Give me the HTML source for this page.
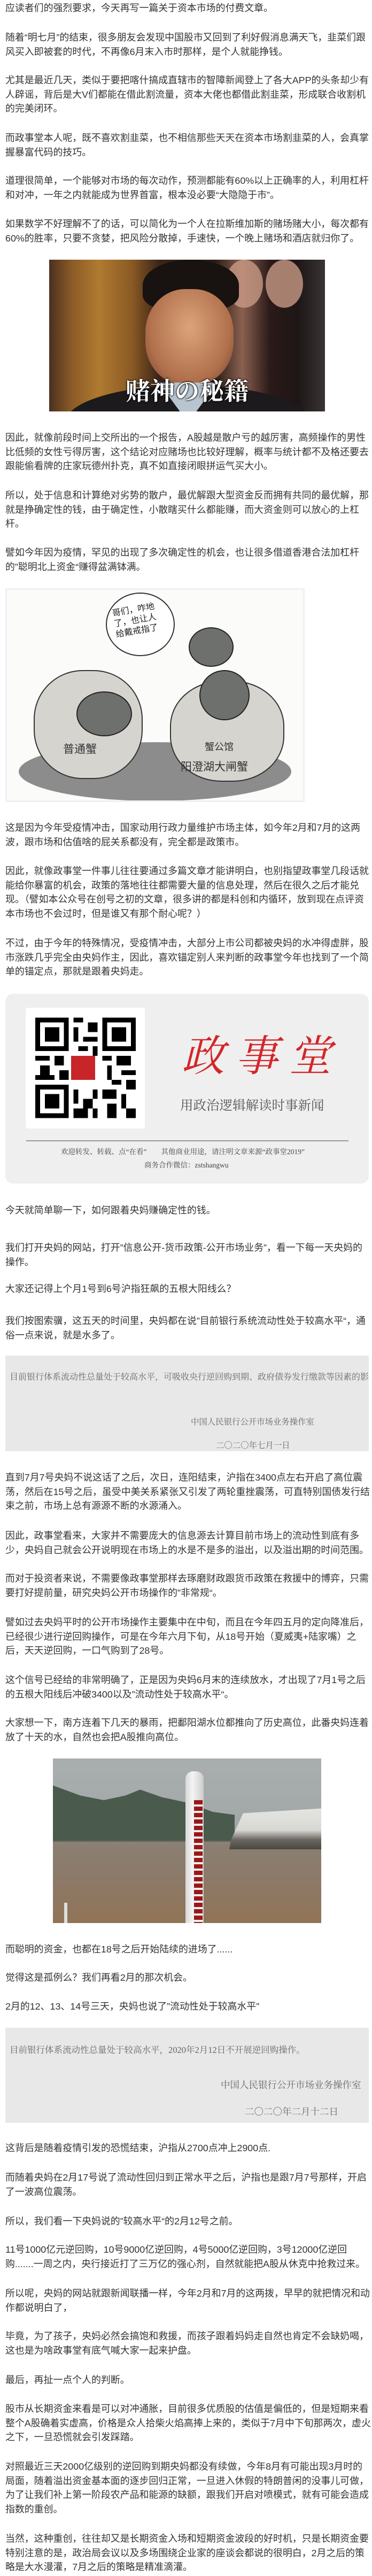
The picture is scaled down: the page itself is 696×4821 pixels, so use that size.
<!DOCTYPE html>
<html><head><meta charset="utf-8">
<style>
html,body{margin:0;padding:0;background:#fff;}
body{width:696px;height:4821px;position:relative;overflow:hidden;font-family:"Liberation Sans","Noto Sans CJK SC",sans-serif;}
.p{position:absolute;left:10px;white-space:nowrap;font-size:17.9px;line-height:26.7px;color:#333;}
.serif{font-family:"Liberation Serif","Noto Serif CJK SC",serif;}
.box{position:absolute;left:10px;width:680px;background:#e8e8e8;overflow:hidden;}
.box div{position:absolute;white-space:nowrap;color:#666;}
</style></head><body>

<div class="p" style="top:2px">应读者们的强烈要求，今天再写一篇关于资本市场的付费文章。</div>
<div class="p" style="top:57px">随着“明七月”的结束，很多朋友会发现中国股市又回到了利好假消息满天飞，韭菜们跟<br>风买入即被套的时代，不再像6月末入市时那样，是个人就能挣钱。</div>
<div class="p" style="top:137px">尤其是最近几天，类似于要把喀什搞成直辖市的智障新闻登上了各大APP的头条却少有<br>人辟谣，背后是大V们都能在借此割流量，资本大佬也都借此割韭菜，形成联合收割机<br>的完美闭环。</div>
<div class="p" style="top:245px">而政事堂本人呢，既不喜欢割韭菜，也不相信那些天天在资本市场割韭菜的人，会真掌<br>握暴富代码的技巧。</div>
<div class="p" style="top:325px">道理很简单，一个能够对市场的每次动作，预测都能有60%以上正确率的人，利用杠杆<br>和对冲，一年之内就能成为世界首富，根本没必要“大隐隐于市”。</div>
<div class="p" style="top:406px">如果数学不好理解不了的话，可以简化为一个人在拉斯维加斯的赌场赌大小，每次都有<br>60%的胜率，只要不贪婪，把风险分散掉，手速快，一个晚上赌场和酒店就归你了。</div>

<!-- photo 1 -->
<div style="position:absolute;left:92px;top:486px;width:516px;height:284px;overflow:hidden;background:linear-gradient(90deg,#4a3020 0%,#8a5a26 8%,#b07a30 18%,#8a5a24 30%,#3a2418 40%,#2a1c14 60%,#8a6050 70%,#2a1a18 80%,#1e1616 90%,#3a3434 100%);">
  <div style="position:absolute;left:330px;top:0;width:70px;height:90px;border-radius:50%;background:#c89a86;opacity:.8"></div>
  <div style="position:absolute;left:405px;top:0;width:70px;height:90px;border-radius:50%;background:#c89a86;opacity:.8"></div>
  <div style="position:absolute;left:175px;top:0;width:180px;height:95px;border-radius:50% 50% 30% 30%;background:#181210;"></div>
  <div style="position:absolute;left:180px;top:55px;width:165px;height:180px;border-radius:45%;background:radial-gradient(ellipse at 50% 40%,#dca47a,#b0704c 65%,#6a4030);"></div>
  <div style="position:absolute;left:30px;top:235px;width:460px;height:140px;border-radius:50% 50% 0 0;background:#1c1a1c;"></div>
  <div style="position:absolute;left:205px;top:230px;width:110px;height:60px;background:#b8c4d0;clip-path:polygon(0 0,100% 0,60% 100%,40% 100%);"></div>
  <div style="position:absolute;left:0;top:210px;width:516px;text-align:center;font-family:'Noto Serif CJK SC',serif;font-size:46px;font-weight:bold;color:#fff;text-shadow:0 0 3px #000,0 0 3px #000;">赌神の秘籍</div>
</div>

<div class="p" style="top:806px">因此，就像前段时间上交所出的一个报告，A股越是散户亏的越厉害，高频操作的男性<br>比低频的女性亏得厉害，这个结论对应赌场也比较好理解，概率与统计都不及格还要去<br>跟能偷看牌的庄家玩德州扑克，真不如直接闭眼拼运气买大小。</div>
<div class="p" style="top:914px">所以，处于信息和计算绝对劣势的散户，最优解跟大型资金反而拥有共同的最优解，那<br>就是挣确定性的钱，由于确定性，小散瞎买什么都能赚，而大资金则可以放心的上杠<br>杆。</div>
<div class="p" style="top:1021px">譬如今年因为疫情，罕见的出现了多次确定性的机会，也让很多借道香港合法加杠杆<br>的”聪明北上资金“赚得盆满钵满。</div>

<!-- crab cartoon -->
<div style="position:absolute;left:10px;top:1101px;width:560px;height:400px;background:#fbfbfa;border:3px solid #eef0f4;box-sizing:border-box;overflow:hidden;">
  <div style="position:absolute;left:22px;top:285px;width:510px;height:110px;border-radius:50%;background:#8c8c8c;"></div>
  <div style="position:absolute;left:50px;top:150px;width:200px;height:200px;border-radius:45%;background:#d6d4cf;border:2px solid #333;"></div>
  <div style="position:absolute;left:305px;top:170px;width:210px;height:185px;border-radius:45%;background:#d6d4cf;border:2px solid #333;"></div>
  <div style="position:absolute;left:130px;top:190px;width:100px;height:80px;border-radius:50%;background:#6e706e;border:2px solid #222;"></div>
  <div style="position:absolute;left:360px;top:150px;width:90px;height:90px;border-radius:50%;background:#6e706e;border:2px solid #222;"></div>
  <div style="position:absolute;left:340px;top:70px;width:80px;height:70px;border-radius:50%;background:#6e706e;border:2px solid #222;"></div>
  <div style="position:absolute;left:185px;top:5px;width:125px;height:115px;border-radius:50%;background:#fff;border:2px solid #333;"></div>
  <div style="position:absolute;left:200px;top:28px;font-size:16px;line-height:20px;color:#222;transform:rotate(-10deg);">哥们，咋地<br>了，也让人<br>给戴戒指了</div>
  <div style="position:absolute;left:105px;top:282px;font-size:21px;color:#333;">普通蟹</div>
  <div style="position:absolute;left:370px;top:280px;font-size:18px;color:#333;">蟹公馆</div>
  <div style="position:absolute;left:325px;top:315px;font-size:21px;color:#333;">阳澄湖大闸蟹</div>
</div>

<div class="p" style="top:1536px">这是因为今年受疫情冲击，国家动用行政力量维护市场主体，如今年2月和7月的这两<br>波，跟市场和估值啥的屁关系都没有，完全都是政策市。</div>
<div class="p" style="top:1617px">因此，就像政事堂一件事儿往往要通过多篇文章才能讲明白，也别指望政事堂几段话就<br>能给你暴富的机会，政策的落地往往都需要大量的信息处理，然后在很久之后才能兑<br>现。（譬如本公众号在创号之初的文章，很多讲的都是科创和内循环，放到现在点评资<br>本市场也不会过时，但是谁又有那个耐心呢？）</div>
<div class="p" style="top:1752px">不过，由于今年的特殊情况，受疫情冲击，大部分上市公司都被央妈的水冲得虚胖，股<br>市涨跌几乎完全由央妈作主，因此，喜欢锚定别人来判断的政事堂今年也找到了一个简<br>单的锚定点，那就是跟着央妈走。</div>

<!-- card -->
<div style="position:absolute;left:10px;top:1860px;width:680px;height:355px;background:#efefef;border-radius:14px;">
  <div style="position:absolute;left:38px;top:26px;width:223px;height:226px;background:#fff;border-radius:4px;"></div>
  <svg style="position:absolute;left:56px;top:41px" width="188" height="195" viewBox="0 0 21 21" shape-rendering="crispEdges">
    <g fill="#000">
      <path d="M0 0h7v7h-7zM1 1v5h5v-5zM2 2h3v3h-3z" fill-rule="evenodd"/>
      <path d="M14 0h7v7h-7zM15 1v5h5v-5zM16 2h3v3h-3z" fill-rule="evenodd"/>
      <path d="M0 14h7v7h-7zM1 15v5h5v-5zM2 16h3v3h-3z" fill-rule="evenodd"/>
      <rect x="8" y="0" width="2" height="1"/><rect x="11" y="1" width="2" height="2"/><rect x="8" y="2" width="1" height="3"/><rect x="10" y="4" width="3" height="1"/><rect x="9" y="6" width="2" height="1"/><rect x="12" y="6" width="1" height="2"/>
      <rect x="0" y="8" width="3" height="1"/><rect x="4" y="8" width="2" height="2"/><rect x="1" y="10" width="2" height="2"/><rect x="0" y="12" width="4" height="1"/><rect x="5" y="11" width="2" height="2"/>
      <rect x="14" y="8" width="2" height="1"/><rect x="17" y="8" width="3" height="2"/><rect x="15" y="10" width="1" height="3"/><rect x="18" y="11" width="3" height="1"/><rect x="16" y="13" width="2" height="1"/><rect x="19" y="13" width="2" height="2"/>
      <rect x="14" y="15" width="3" height="2"/><rect x="18" y="16" width="1" height="3"/><rect x="15" y="18" width="2" height="3"/><rect x="19" y="19" width="2" height="2"/>
      <rect x="8" y="15" width="1" height="3"/><rect x="10" y="17" width="2" height="2"/><rect x="8" y="19" width="3" height="2"/><rect x="12" y="15" width="1" height="2"/><rect x="12" y="19" width="1" height="2"/>
    </g>
    <rect x="7.5" y="8" width="5" height="5" fill="#c8252b"/>
  </svg>
  <div style="position:absolute;left:330px;top:55px;font-family:'Noto Serif CJK SC',serif;font-size:80px;line-height:110px;color:#d4262a;font-style:italic;letter-spacing:20px;">政事堂</div>
  <div style="position:absolute;left:327px;top:190px;font-family:'Noto Serif CJK SC',serif;font-size:24.5px;color:#555;white-space:nowrap;">用政治逻辑解读时事新闻</div>
  <div style="position:absolute;left:39px;top:274px;width:603px;height:2px;background:#999;"></div>
  <div class="serif" style="position:absolute;left:104px;top:284px;font-size:13.5px;color:#444;white-space:nowrap;">欢迎转发、转载、点“在看”　　其他商业用途，请注明文章来源“政事堂2019”</div>
  <div class="serif" style="position:absolute;left:260px;top:309px;font-size:13.5px;color:#444;white-space:nowrap;">商务合作微信：zstshangwu</div>
</div>

<div class="p" style="top:2252px">今天就简单聊一下，如何跟着央妈赚确定性的钱。</div>
<div class="p" style="top:2322px">我们打开央妈的网站，打开”信息公开-货币政策-公开市场业务”，看一下每一天央妈的<br>操作。</div>
<div class="p" style="top:2399px">大家还记得上个月1号到6号沪指狂飙的五根大阳线么？</div>
<div class="p" style="top:2459px">我们按图索骥，这五天的时间里，央妈都在说”目前银行系统流动性处于较高水平“，通<br>俗一点来说，就是水多了。</div>

<div class="box serif" style="top:2537px;height:179px;">
  <div style="left:8px;top:27px;font-size:16px;">目前银行体系流动性总量处于较高水平，可吸收央行逆回购到期、政府债券发行缴款等因素的影响，</div>
  <div style="left:347px;top:112px;font-size:15.4px;">中国人民银行公开市场业务操作室</div>
  <div style="left:394px;top:156px;font-size:15.4px;">二〇二〇年七月一日</div>
</div>

<div class="p" style="top:2752px">直到7月7号央妈不说这话了之后，次日，连阳结束，沪指在3400点左右开启了高位震<br>荡，然后在15号之后，虽受中美关系紧张又引发了两轮重挫震荡，可直特别国债发行结<br>束之前，市场上总有源源不断的水源涌入。</div>
<div class="p" style="top:2861px">因此，政事堂看来，大家并不需要庞大的信息源去计算目前市场上的流动性到底有多<br>少，央妈自己就会公开说明现在市场上的水是不是多的溢出，以及溢出期的时间范围。</div>
<div class="p" style="top:2941px">而对于投资者来说，不需要像政事堂那样去琢磨财政跟货币政策在救援中的博弈，只需<br>要打好提前量，研究央妈公开市场操作的”非常规“。</div>
<div class="p" style="top:3023px">譬如过去央妈平时的公开市场操作主要集中在中旬，而且在今年四五月的定向降准后，<br>已经很少进行逆回购操作，可是在今年六月下旬，从18号开始（夏威夷+陆家嘴）之<br>后，天天逆回购，一口气购到了28号。</div>
<div class="p" style="top:3131px">这个信号已经给的非常明确了，正是因为央妈6月末的连续放水，才出现了7月1号之后<br>的五根大阳线后冲破3400以及”流动性处于较高水平“。</div>
<div class="p" style="top:3211px">大家想一下，南方连着下几天的暴雨，把鄱阳湖水位都推向了历史高位，此番央妈连着<br>放了十天的水，自然也会把A股推向高位。</div>

<!-- flood photo -->
<div style="position:absolute;left:99px;top:3291px;width:502px;height:308px;overflow:hidden;background:linear-gradient(180deg,#a9aeae 0%,#a0a6a6 49%,#8a8074 50%,#8c7a6a 70%,#917456 100%);">
  <div style="position:absolute;left:0;top:45px;width:340px;height:110px;background:#4a5a4c;clip-path:polygon(0 5%,15% 22%,28% 30%,40% 22%,48% 12%,60% 25%,75% 35%,88% 50%,100% 55%,100% 100%,0 100%);"></div>
  <div style="position:absolute;left:0;top:154px;width:502px;height:2px;background:#6a6a62;"></div>
  <div style="position:absolute;left:330px;top:80px;width:172px;height:90px;background:linear-gradient(180deg,#e8e8e6 0%,#d8d8d4 60%,#6a6660 80%,#4a4640 100%);clip-path:polygon(15% 25%,100% 15%,100% 100%,0 100%,2% 80%);"></div>
  <div style="position:absolute;left:248px;top:24px;width:34px;height:284px;background:linear-gradient(90deg,#d8d8d8,#f4f4f4 40%,#ccc);border-radius:14px 14px 0 0;"></div>
  <div style="position:absolute;left:264px;top:78px;width:16px;height:230px;background:repeating-linear-gradient(180deg,#9a1818 0 8px,#f0f0f0 8px 12px);"></div>
  <div style="position:absolute;left:21px;top:270px;width:6px;height:38px;background:#ddd;"></div>
</div>

<div class="p" style="top:3635px">而聪明的资金，也都在18号之后开始陆续的进场了......</div>
<div class="p" style="top:3688px">觉得这是孤例么？我们再看2月的那次机会。</div>
<div class="p" style="top:3742px">2月的12、13、14号三天，央妈也说了”流动性处于较高水平”</div>

<div class="box serif" style="top:3795px;height:178px;">
  <div style="left:8px;top:28px;font-size:16.5px;">目前银行体系流动性总量处于较高水平，2020年2月12日不开展逆回购操作。</div>
  <div style="left:403px;top:94px;font-size:17.5px;">中国人民银行公开市场业务操作室</div>
  <div style="left:448px;top:144px;font-size:17.5px;">二〇二〇年二月十二日</div>
</div>

<div class="p" style="top:4007px">这背后是随着疫情引发的恐慌结束，沪指从2700点冲上2900点.</div>
<div class="p" style="top:4062px">而随着央妈在2月17号说了流动性回归到正常水平之后，沪指也是跟7月7号那样，开启<br>了一波高位震荡。</div>
<div class="p" style="top:4144px">所以，我们看一下央妈说的”较高水平“的2月12号之前。</div>
<div class="p" style="top:4197px">11号1000亿元逆回购，10号9000亿逆回购，4号5000亿逆回购，3号12000亿逆回<br>购.......一周之内，央行接近打了三万亿的强心剂，自然就能把A股从休克中抢救过来。</div>
<div class="p" style="top:4279px">所以呢，央妈的网站就跟新闻联播一样，今年2月和7月的这两拨，早早的就把情况和动<br>作都说明白了，</div>
<div class="p" style="top:4359px">毕竟，为了孩子，央妈必然会搞饱和救援，而孩子跟着妈妈走自然也肯定不会缺奶喝，<br>这也是为啥政事堂有底气喊大家一起来护盘。</div>
<div class="p" style="top:4441px">最后，再扯一点个人的判断。</div>
<div class="p" style="top:4495px">股市从长期资金来看是可以对冲通胀，目前很多优质股的估值是偏低的，但是短期来看<br>整个A股确着实虚高，价格是众人拾柴火焰高捧上来的，类似于7月中下旬那两次，虚火<br>之下，一旦恐慌就会引发踩踏。</div>
<div class="p" style="top:4603px">对照最近三天2000亿级别的逆回购到期央妈都没有续做，今年8月有可能出现3月时的<br>局面，随着溢出资金基本面的逐步回归正常，一旦进入休假的特朗普闲的没事儿可做，<br>为了让我们补上第一阶段农产品和能源的缺额，跟我们开启对喷模式，就有可能会造成<br>指数的重创。</div>
<div class="p" style="top:4738px">当然，这种重创，往往却又是长期资金入场和短期资金波段的好时机，只是长期资金要<br>特别注意的是，政治局会议以及多场围绕企业家的座谈会都说的很明白，2月之后的策<br>略是大水漫灌，7月之后的策略是精准滴灌。</div>

</body></html>
